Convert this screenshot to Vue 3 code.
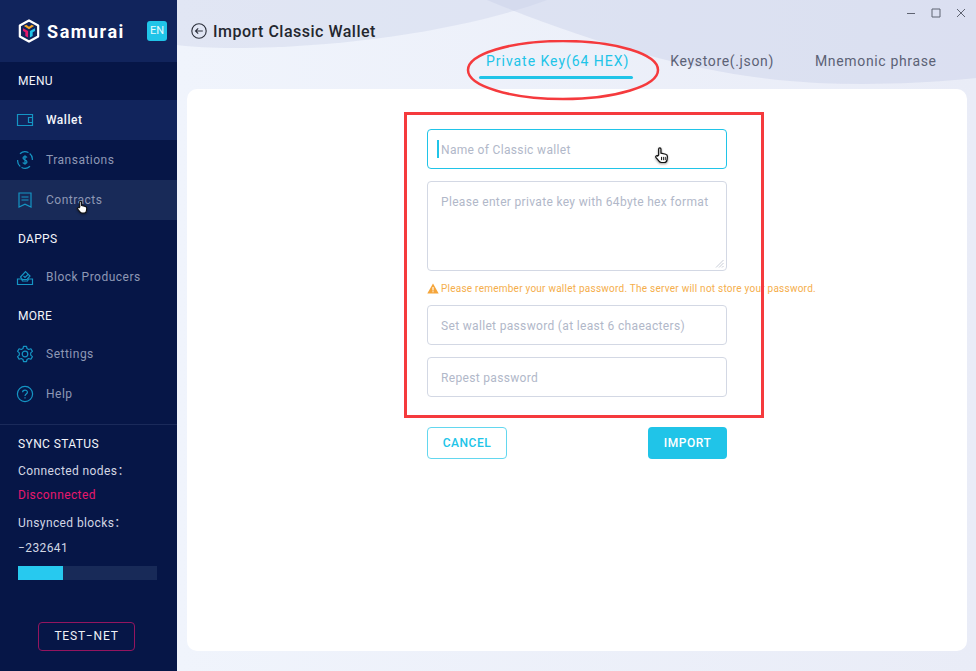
<template>
  <div class="app">
    <aside class="sidebar">
      <div class="brand">
        <svg class="logo" viewBox="0 0 24 26" width="22" height="24">
          <path d="M12 1.500 22 7v12l-10 5.500L2 19V7z" fill="none" stroke="#fff" stroke-width="2.400" stroke-linejoin="round"/>
          <path d="M6.500 7.500 9 6.300l3 2 3-2 2.500 1.200L12 11z" fill="#f5a623"/>
          <path d="M5.500 10 11 13v7l-3-1.600v-4L5.500 13z" fill="#e6186d"/>
          <path d="M18.500 10 13 13v7l3-1.600v-4l2.500-1.400z" fill="#20c4e8"/>
        </svg>
        <span class="brand-name">Samurai</span>
        <span class="lang">EN</span>
      </div>

      <div class="group-title first">MENU</div>
      <div v-for="item in menu" :key="item.label" class="nav-item" :class="item.state">
        <svg class="nav-icon" viewBox="0 0 18 18" width="18" height="18" v-html="item.icon"></svg>
        <span>{{ item.label }}</span>
      </div>

      <div class="group-title">DAPPS</div>
      <div v-for="item in dapps" :key="item.label" class="nav-item">
        <svg class="nav-icon" viewBox="0 0 18 18" width="18" height="18" v-html="item.icon"></svg>
        <span>{{ item.label }}</span>
      </div>

      <div class="group-title">MORE</div>
      <div v-for="item in more" :key="item.label" class="nav-item">
        <svg class="nav-icon" viewBox="0 0 18 18" width="18" height="18" v-html="item.icon"></svg>
        <span>{{ item.label }}</span>
      </div>

      <div class="sync">
        <div class="sync-title">SYNC STATUS</div>
        <div class="sync-row">Connected nodes：</div>
        <div class="sync-row danger">Disconnected</div>
        <div class="sync-row blocks">Unsynced blocks：</div>
        <div class="sync-row count">−232641</div>
        <div class="progress"><div class="progress-bar" :style="{ width: progress + '%' }"></div></div>
        <div class="net-wrap"><span class="net">TEST−NET</span></div>
      </div>

      <svg class="cursor cursor-nav" viewBox="0 0 16 18" width="12" height="14"><path :d="handPath" fill="#fff" stroke="#111" stroke-width="1.500" stroke-linejoin="round"/></svg>
    </aside>

    <main class="main">
      <svg class="bg" viewBox="0 0 799 120" width="799" height="120" preserveAspectRatio="none">
        <path d="M0 0H370C300 26 180 48 55 48 35 48 15 47 0 45z" fill="#c9d0e8" fill-opacity=".38"/>
        <path d="M310 0H799V78C740 84 690 85 640 83 540 78 430 50 310 0z" fill="#c9d0e8" fill-opacity=".45"/>
      </svg>

      <div class="win-controls">
        <svg viewBox="0 0 10 10" width="10" height="10"><path d="M1 5.500H9" /></svg>
        <svg viewBox="0 0 10 10" width="10" height="10"><path d="M1 1H9V9H1z" /></svg>
        <svg viewBox="0 0 10 10" width="10" height="10"><path d="M1 1 9 9M9 1 1 9" /></svg>
      </div>

      <header class="page-head">
        <svg viewBox="0 0 16 16" width="16" height="16" class="back">
          <circle cx="8" cy="8" r="7.200" />
          <path d="M11.800 8H4.500M7.200 5.300 4.500 8l2.700 2.700" />
        </svg>
        <h1>Import Classic Wallet</h1>
      </header>

      <nav class="tabs">
        <span v-for="tab in tabs" :key="tab" class="tab" :class="{ active: tab === activeTab }">{{ tab }}</span>
      </nav>

      <section class="card">
        <form class="form" @submit.prevent>
          <div class="field-wrap">
            <input class="field focus" placeholder="Name of Classic wallet" />
            <i class="caret"></i>
            <svg class="cursor cursor-field" viewBox="0 0 16 18" width="15" height="18"><path :d="handPath" fill="#fff" stroke="#111" stroke-width="1.300" stroke-linejoin="round"/><path d="M8 11v3.500M10 11v3.500M12 11v3.500" stroke="#111" stroke-width="1" fill="none"/></svg>
          </div>
          <div class="area-wrap">
            <textarea class="field area" placeholder="Please enter private key with 64byte hex format"></textarea>
            <svg class="grip" viewBox="0 0 9 9" width="9" height="9"><path d="M8.500 1 1 8.500M8.500 4 4 8.500M8.500 7 7 8.500" /></svg>
          </div>
          <div class="warn">
            <svg viewBox="0 0 12 11" width="12" height="11"><path d="M6 .5 11.700 10.500H.3z" fill="#f5a53a"/><path d="M6 4v3.500M6 8.300v1" stroke="#fff" stroke-width="1.100"/></svg>
            <span>Please remember your wallet password. The server will not store your password.</span>
          </div>
          <input class="field" placeholder="Set wallet password (at least 6 chaeacters)" />
          <input class="field" placeholder="Repest password" />
          <div class="actions">
            <button class="btn ghost" type="button">CANCEL</button>
            <button class="btn solid" type="button">IMPORT</button>
          </div>
        </form>
      </section>

      <!-- red annotations on top of the screenshot -->
      <svg class="mark-ellipse" viewBox="0 0 194 62" width="194" height="62"><ellipse cx="97" cy="30" rx="95" ry="29" /></svg>
      <div class="mark-rect"></div>
    </main>
  </div>
</template>

<script setup>
const handPath = 'M5 9V2.500a1.200 1.200 0 0 1 2.400 0V7l5 1.200c1.400.4 2 1.200 1.900 2.600l-.4 3.400c-.2 1.600-1 2.800-2.900 2.800H8c-1.200 0-2-.5-2.700-1.500L2 11.500c-.8-1.300.9-2.400 1.900-1.400z'

const stroke = 'fill="none" stroke="#1595c4" stroke-width="1.200"'
const menu = [
  { label: 'Wallet', state: 'active', icon: `<g ${stroke}><path d="M1.500 3.500h15v11h-15z"/><path d="M16.500 6.500h-4v5h4" /></g>` },
  { label: 'Transations', state: '', icon: `<g ${stroke}><path d="M4 2.800A7.300 7.300 0 0 1 16.300 9M14 15.200A7.300 7.300 0 0 1 1.700 9" stroke-dasharray="9 1.500"/><path d="M11 6.500C10.500 5.500 7 5 7 7c0 2 4 1.500 4 4 0 1.800-3.500 1.800-4.200.5M9 4.200v9.600" /></g>` },
  { label: 'Contracts', state: 'hover', icon: `<g ${stroke}><path d="M3 2h12v14l-6-2.800L3 16z"/><path d="M5.500 6h7M5.500 9h7" /></g>` }
]
const dapps = [
  { label: 'Block Producers', icon: `<g ${stroke}><path d="M1.500 11v5.500h15V11h-4l-1 2h-5l-1-2z"/><path d="M4.500 9 9.500 3.500 14 8l-3 3.500H6.500z"/><path d="M7.500 8l1.500 1.500L12 6.500" /></g>` }
]
const more = [
  { label: 'Settings', icon: `<g ${stroke}><circle cx="9" cy="9" r="2.800"/><path d="M7.500 1.300h3l.5 2.200 1.700 1 2.200-.7 1.500 2.600-1.700 1.500v2.200l1.700 1.500-1.500 2.600-2.200-.7-1.700 1-.5 2.200h-3l-.5-2.200-1.700-1-2.200.7-1.500-2.600 1.700-1.500V7.900L1.600 6.400l1.500-2.600 2.200.7 1.700-1z" stroke-linejoin="round"/></g>` },
  { label: 'Help', icon: `<g ${stroke}><circle cx="9" cy="9" r="7.600"/><path d="M6.600 7.200C6.600 4.400 11.400 4.400 11.400 7.200 11.400 9 9 9 9 11"/><path d="M9 12.300v1.300" /></g>` }
]

const tabs = ['Private Key(64 HEX)', 'Keystore(.json)', 'Mnemonic phrase']
const activeTab = tabs[0]
const progress = 32.5
</script>

<style>
html, body { margin: 0; height: 100%; overflow: hidden; }
</style>

<style scoped>
.app {
  display: flex;
  width: 976px;
  height: 671px;
  font-family: Roboto, "Noto Sans CJK SC", sans-serif;
  overflow: hidden;
}
.sidebar {
  position: relative;
  width: 177px;
  flex: none;
  background: #061647;
  color: #fff;
  display: flex;
  flex-direction: column;
}
.brand {
  height: 62px;
  box-sizing: border-box;
  background: #11245c;
  display: flex;
  align-items: center;
  padding: 0 10px 0 18px;
}
.logo { flex: none; margin-right: 7px; }
.brand-name { font-size: 18px; font-weight: 700; letter-spacing: 1.55px; flex: 1; }
.lang {
  width: 20px;
  height: 20px;
  background: #20c4e8;
  border-radius: 3px;
  font-size: 11px;
  line-height: 20px;
  text-align: center;
  color: #e6f9fd;
}
.group-title {
  height: 38px;
  line-height: 38px;
  padding-left: 18px;
  font-size: 12px;
  letter-spacing: .3px;
  color: #f2f4fa;
}
.nav-item {
  height: 40px;
  display: flex;
  align-items: center;
  padding-left: 16px;
  font-size: 12px;
  letter-spacing: .5px;
  color: #8e98b5;
}
.group-title + .nav-item:not(.active) { margin-top: -1px; }
.nav-item.active { background: #11245c; color: #f4f6fb; font-weight: 500; }
.nav-item.hover { background: #182a58; }
.nav-icon { margin-right: 12px; flex: none; }
.sync {
  margin-top: 10px;
  border-top: 1px solid #1a2a5a;
  padding: 10px 18px 0;
  font-size: 12px;
  letter-spacing: .4px;
  color: #d3d7e4;
}
.sync-title { color: #f2f4fa; line-height: 18px; margin-bottom: 6px; }
.sync-row { line-height: 24px; }
.blocks { margin-top: 4px; }
.count { margin-top: 1px; }
.danger { color: #e6186d; }
.progress { width: 139px; height: 14px; background: #182a58; margin-top: 6px; }
.progress-bar { height: 100%; background: #27c9ef; }
.net-wrap { display: flex; justify-content: center; margin: 42px 4px 0 0; }
.net {
  width: 97px;
  height: 29px;
  line-height: 27px;
  box-sizing: border-box;
  border: 1.500px solid #94155f;
  border-radius: 4px;
  text-align: center;
  color: #eef0f6;
  letter-spacing: .8px;
}
.cursor { position: absolute; filter: drop-shadow(0 1px 1px rgba(0,0,0,.4)); }
.cursor-nav { left: 76px; top: 200px; }
.main {
  position: relative;
  flex: 1;
  background: linear-gradient(90deg, #f0f4fc, #e9ecf7);
  display: flex;
  flex-direction: column;
}
.bg { position: absolute; left: 0; top: 0; }
.win-controls {
  position: absolute;
  right: 10px;
  top: 8px;
  display: flex;
  gap: 15px;
}
.win-controls svg { fill: none; stroke: #5f6472; stroke-width: 1; }
.page-head {
  position: relative;
  display: flex;
  align-items: center;
  gap: 6px;
  padding: 20px 0 0 14px;
  height: 22px;
}
.back { fill: none; stroke: #2b2f3a; stroke-width: 1.100; }
h1 { margin: 0; font-size: 16px; font-weight: 500; color: #24272f; letter-spacing: .5px; }
.tabs {
  position: relative;
  display: flex;
  gap: 41px;
  padding: 8px 0 0 309px;
  height: 39px;
  box-sizing: border-box;
}
.tab { font-size: 14px; line-height: 22px; color: #5c6276; letter-spacing: .65px; white-space: nowrap; }
.tab.active { color: #20c4e8; position: relative; letter-spacing: .97px; }
.tab.active::after {
  content: "";
  position: absolute;
  left: -7px;
  right: -4px;
  top: 26px;
  height: 3px;
  border-radius: 2px;
  background: #20c4e8;
}
.card {
  position: relative;
  margin: 8px 9px 20px 10px;
  flex: 1;
  background: #fff;
  border-radius: 10px;
  display: flex;
  justify-content: center;
  padding: 40px 0 0 0;
}
.form { width: 300px; display: flex; flex-direction: column; }
.field-wrap { position: relative; height: 40px; margin-bottom: 12px; }
.area-wrap { position: relative; height: 90px; }
.field {
  display: block;
  width: 300px;
  height: 40px;
  box-sizing: border-box;
  border: 1px solid #d3d8e4;
  border-radius: 4px;
  padding: 2px 13px 0;
  font: 12px Roboto, sans-serif;
  letter-spacing: .33px;
  color: #333;
  outline: none;
  background: #fff;
}
.field::placeholder { color: #b1b8c9; opacity: 1; }
.field.focus { border-color: #20c4e8; }
.area {
  height: 90px;
  padding: 12px 13px;
  line-height: 16px;
  resize: none;
}
.grip { position: absolute; right: 3px; bottom: 3px; fill: none; stroke: #b9bfcc; stroke-width: .8; }
.caret { position: absolute; left: 10px; top: 11px; width: 2px; height: 18px; background: #20c4e8; }
.cursor-field { left: 227px; top: 17px; }
.warn {
  display: flex;
  align-items: center;
  gap: 2px;
  height: 34px;
  font-size: 10px;
  color: #f5ae4b;
  letter-spacing: .24px;
  white-space: nowrap;
}
.warn svg { flex: none; }
.warn + .field { margin-bottom: 12px; }
.actions { display: flex; justify-content: space-between; margin-top: 30px; }
.btn {
  width: 79px;
  height: 32px;
  box-sizing: border-box;
  border-radius: 4px;
  font: 500 12px Roboto, sans-serif;
  letter-spacing: .55px;
  padding: 0;
}
.ghost { width: 80px; background: #fff; border: 1.500px solid #63d7ef; color: #20c4e8; }
.solid { background: #20c4e8; border: none; color: #fff; }
.mark-ellipse { position: absolute; left: 289px; top: 40px; fill: none; stroke: #f53a3d; stroke-width: 2.500; }
.mark-rect {
  position: absolute;
  left: 227px;
  top: 112px;
  width: 360px;
  height: 306px;
  box-sizing: border-box;
  border: 3px solid #f53a3d;
}
</style>
